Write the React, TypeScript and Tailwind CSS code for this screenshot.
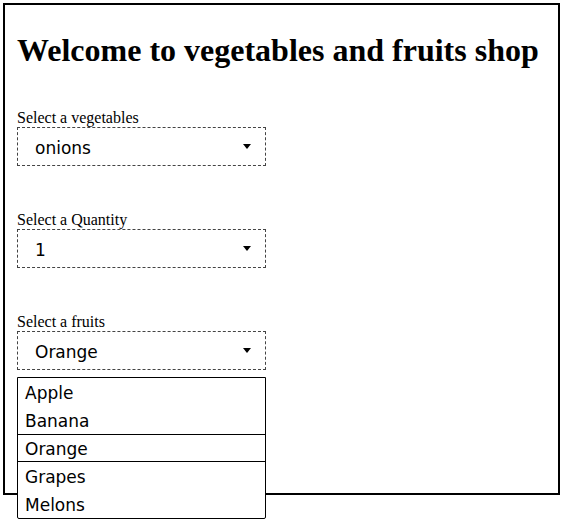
const FRUITS = ['Apple', 'Banana', 'Orange', 'Grapes', 'Melons'];

function Caret() {
  return (
    <svg width="8" height="5" viewBox="0 0 8 5" className="mr-[14px]">
      <path d="M0 0 H8 L4 5 Z" fill="#000" />
    </svg>
  );
}

function Select({ value }: { value: string }) {
  return (
    <div className="flex h-[39px] w-[249px] items-center justify-between border border-dashed border-[#444] bg-white">
      <span className="pl-[17px] pt-[4px] font-['DejaVu_Sans',sans-serif] text-[17px] text-black">{value}</span>
      <Caret />
    </div>
  );
}

function Field({ label, value, children }: { label: string; value: string; children?: React.ReactNode }) {
  return (
    <div className="relative flex flex-col">
      <label className="font-['Liberation_Serif',serif] text-[16px] leading-[19px] text-black">{label}</label>
      <Select value={value} />
      {children}
    </div>
  );
}

export default function App() {
  return (
    <div className="min-h-[525px] w-[564px] bg-white pl-[3px] pt-[3px]">
      <div className="h-[492px] w-[557px] border-2 border-black px-[12px]">
        <h1 className="mt-[27px] font-['Liberation_Serif',serif] text-[32px] font-bold leading-[37px] text-black">
          Welcome to vegetables and fruits shop
        </h1>

        <div className="mt-[39px] flex flex-col gap-[44px]">
          <Field label="Select a vegetables" value="onions" />
          <Field label="Select a Quantity" value="1" />
          <Field label="Select a fruits" value="Orange">
            {/* ── open dropdown list ── */}
            <ul className="absolute left-0 top-[65px] w-[249px] rounded-b-[2px] border border-black bg-white font-['DejaVu_Sans',sans-serif] text-[17px] text-black">
              {FRUITS.map((f) => (
                <li
                  key={f}
                  className={
                    f === 'Orange'
                      ? 'flex h-[28px] items-center border-y border-black pl-[7px] pt-[3px]'
                      : 'flex h-[28px] items-center pl-[7px] pt-[3px]'
                  }
                >
                  {f}
                </li>
              ))}
            </ul>
          </Field>
        </div>
      </div>
    </div>
  );
}
